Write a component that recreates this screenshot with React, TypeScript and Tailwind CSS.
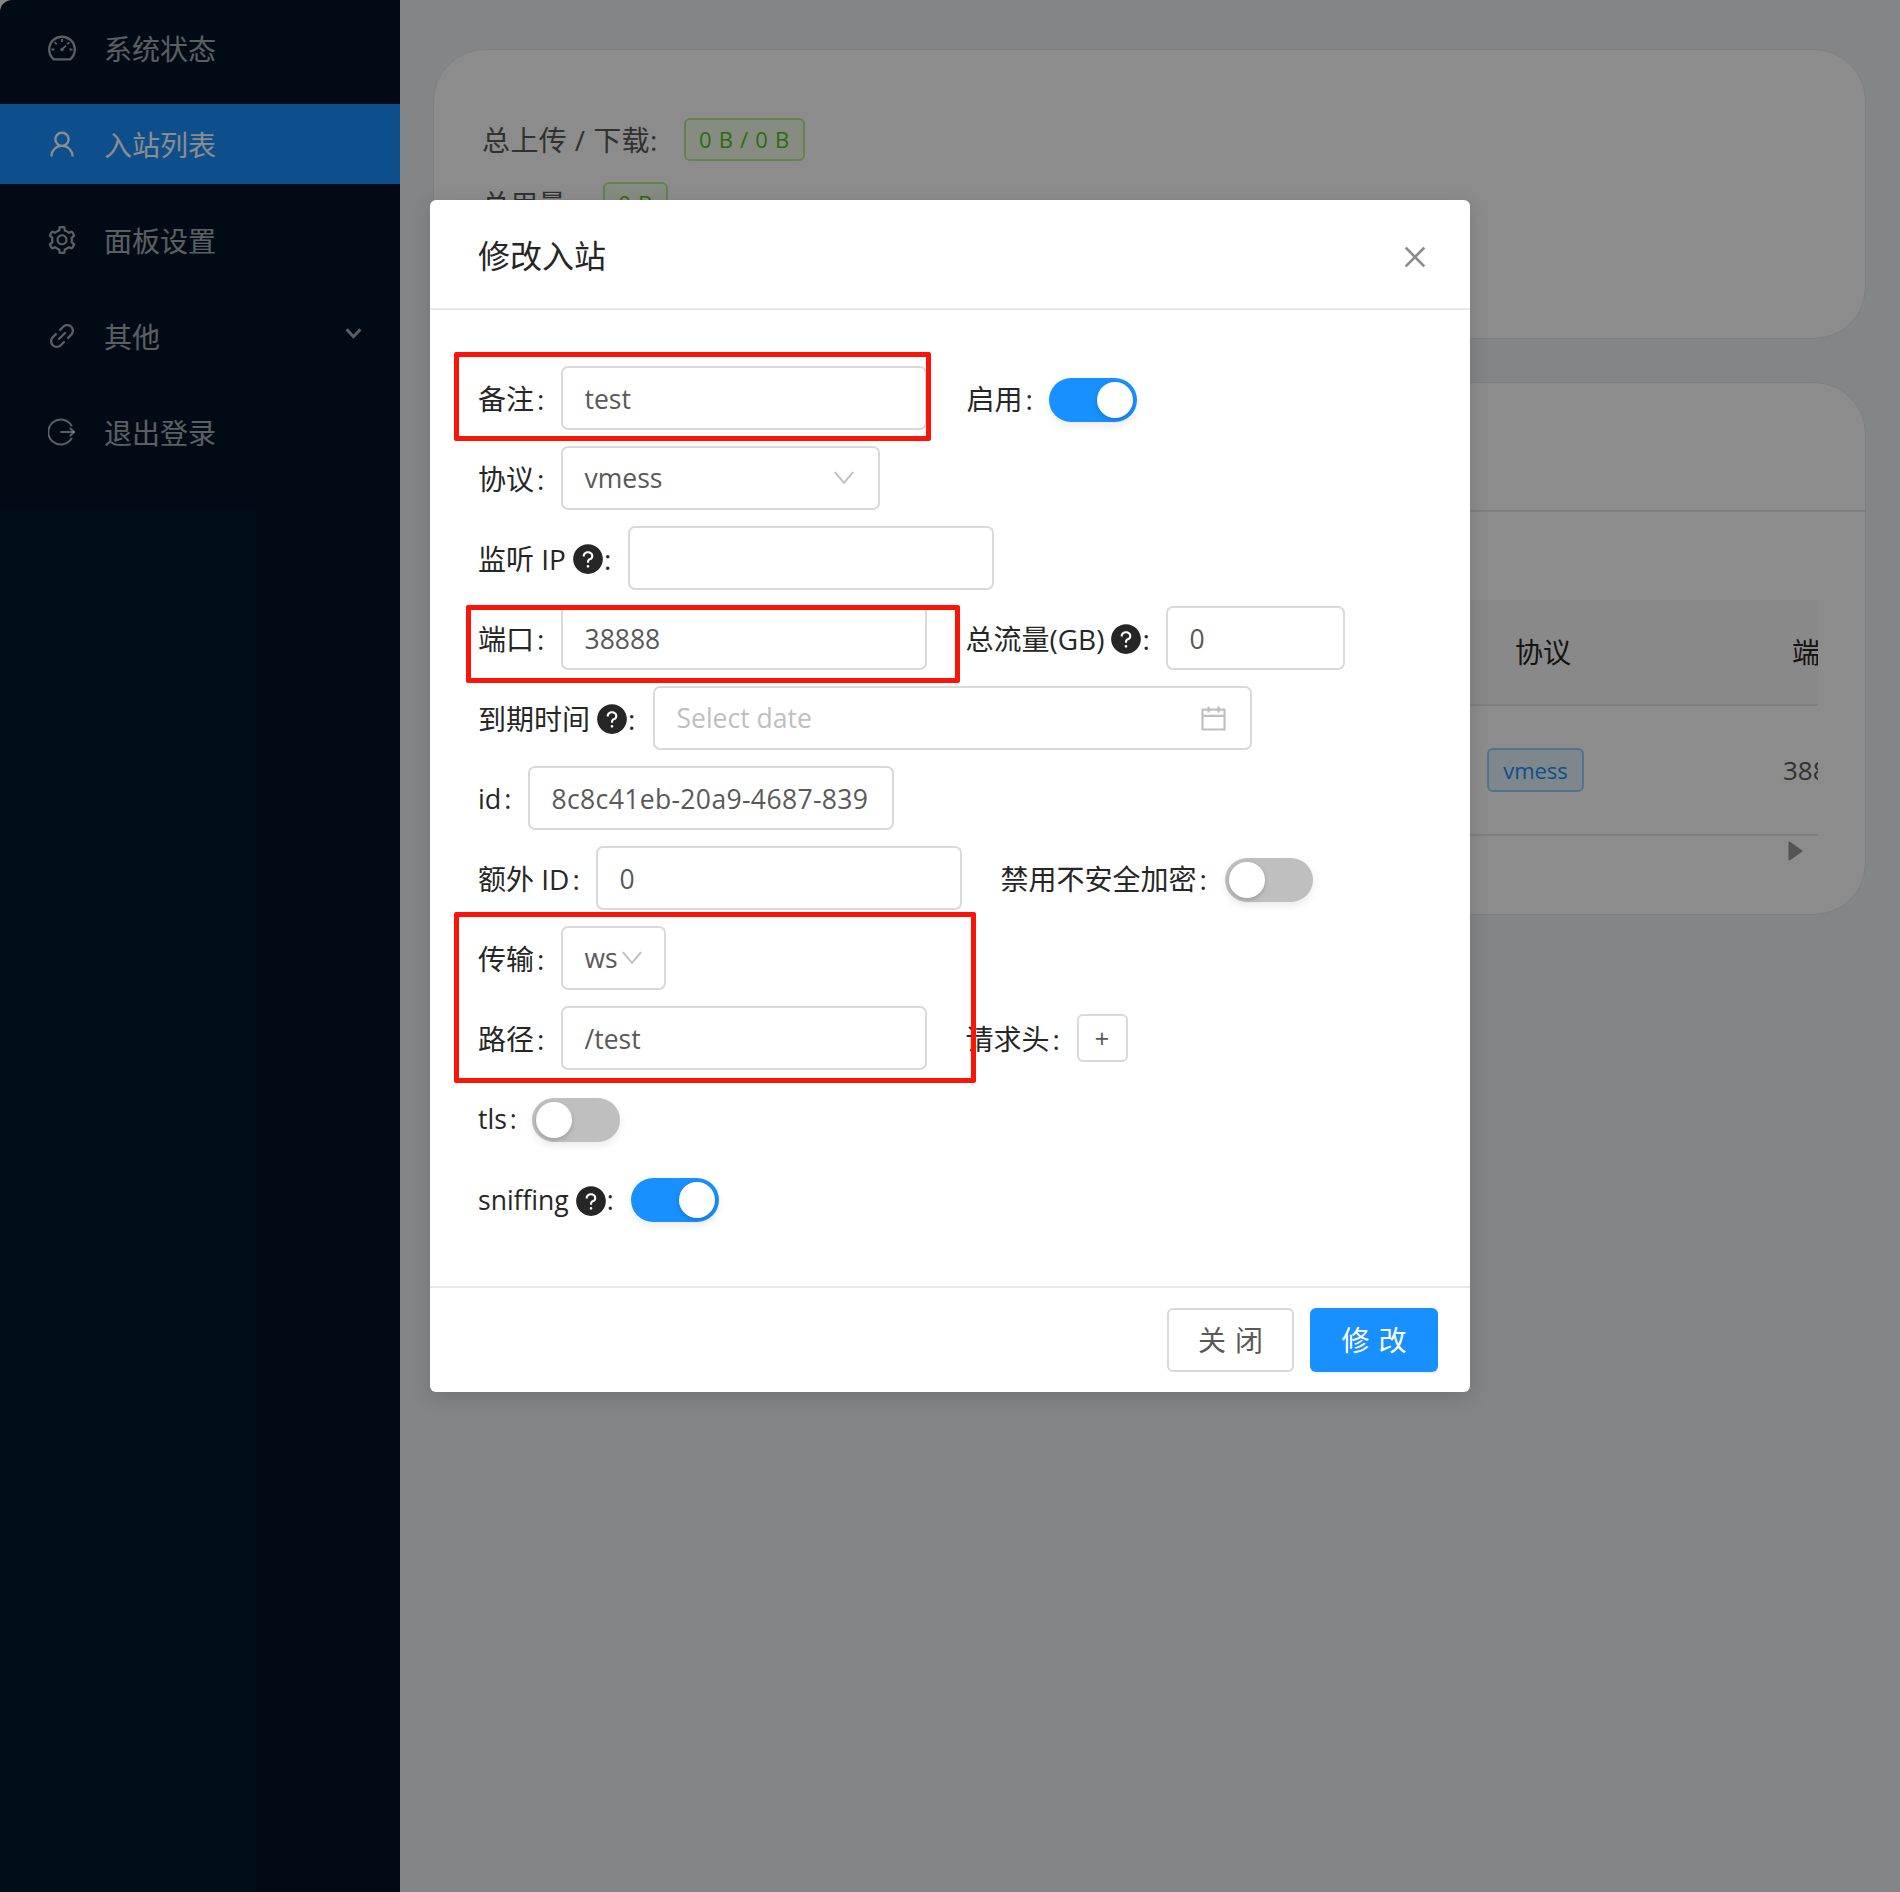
import React from "react";
import {
  AiFillQuestionCircle,
  AiOutlineCalendar,
  AiOutlineClose,
  AiOutlineDashboard,
  AiOutlineLink,
  AiOutlineSetting,
  AiOutlineUser,
} from "react-icons/ai";

const LogoutIcon = () => (
  <svg viewBox="0 0 28 28" className="w-[28px] h-[28px]" fill="none" stroke="currentColor" strokeWidth="2" strokeLinecap="round">
    <path d="M23.5 7.5A12.5 12.5 0 1 0 23.5 20.5" />
    <path d="M13 14H26" />
    <path d="M22.5 10.5L26 14L22.5 17.5" strokeLinejoin="round" />
  </svg>
);

function MenuItem({ icon, text, active, chevron }: { icon: React.ReactNode; text: string; active?: boolean; chevron?: boolean }) {
  return (
    <div className={`h-[80px] mb-[16px] flex items-center pl-[48px] pr-[38px] text-[28px] ${active ? "bg-[#1890ff] text-white" : "text-white/65"}`}>
      <span className="w-[28px] h-[28px] flex items-center justify-center text-[32px] [&_svg]:shrink-0">{icon}</span>
      <span className="ml-[28px] flex-1 pt-[2px]">{text}</span>
      {chevron && (
        <svg viewBox="0 0 18 12" className="w-[17px] h-[11px] -mt-[6px]" fill="none" stroke="currentColor" strokeWidth="3.2">
          <path d="M1.5 1.5L9 9.5L16.5 1.5" />
        </svg>
      )}
    </div>
  );
}

function Sidebar() {
  return (
    <aside className="w-[400px] shrink-0 bg-[#001529] pt-[8px] rounded-tl-[12px]">
      <MenuItem icon={<AiOutlineDashboard />} text="系统状态" />
      <MenuItem icon={<AiOutlineUser />} text="入站列表" active />
      <MenuItem icon={<AiOutlineSetting />} text="面板设置" />
      <MenuItem icon={<AiOutlineLink />} text="其他" chevron />
      <MenuItem icon={<LogoutIcon />} text="退出登录" />
    </aside>
  );
}

function GreenTag({ text, w }: { text: string; w: string }) {
  return (
    <span className={`${w} h-[43px] flex items-center justify-center whitespace-nowrap rounded-[6px] border-2 border-[#b7eb8f] bg-[#f6ffed] text-[#52c41a] text-[22px] tracking-[0.7px]`}>
      {text}
    </span>
  );
}

function Background() {
  return (
    <div className="flex w-[1900px] h-[1892px] bg-[#f0f2f5] text-[#262626]">
      <Sidebar />
      <main className="flex-1 pl-[33px] pr-[34px] pt-[49px]">
        <section className="h-[290px] bg-white rounded-[52px] border border-[#e8e8e8] pl-[48px] pt-[68px] text-[28px] text-[#595959]">
          <div className="flex items-center h-[43px]">
            <span className="w-[202px] shrink-0 whitespace-nowrap tracking-[0.4px]">总上传 / 下载:</span>
            <GreenTag text="0 B / 0 B" w="w-[121px]" />
          </div>
          <div className="flex items-center h-[43px] mt-[21px]">
            <span className="w-[121px] shrink-0">总用量:</span>
            <GreenTag text="0 B" w="w-[65px]" />
          </div>
        </section>
        <section className="mt-[43px] h-[533px] bg-white rounded-[52px] border border-[#e8e8e8]">
          <div className="h-[129px] border-b-2 border-[#e8e8e8]" />
          <div className="ml-[49px] w-[1335px] mt-[88px] overflow-hidden">
            <div className="h-[106px] bg-[#fafafa] border-b-2 border-[#e8e8e8] flex items-center text-[28px] text-[#262626]">
              <span className="ml-[1032px] w-[277px] shrink-0">协议</span>
              <span className="shrink-0">端口</span>
            </div>
            <div className="h-[130px] border-b-2 border-[#e8e8e8] flex items-center text-[26px] text-[#595959]">
              <span className="ml-[1004px] w-[97px] h-[44px] shrink-0 flex items-center justify-center rounded-[6px] border-2 border-[#91d5ff] bg-[#e6f7ff] text-[#1890ff] text-[22px]">vmess</span>
              <span className="ml-[199px] shrink-0">38888</span>
            </div>
          </div>
          <div className="ml-[1354px] mt-[5px] text-[#9a9a9a]">
            <svg viewBox="0 0 15 20" className="w-[15px] h-[20px]" fill="currentColor" stroke="currentColor" strokeWidth="2" strokeLinejoin="round">
              <path d="M1.5 1.5L13.5 10L1.5 18.5Z" />
            </svg>
          </div>
        </section>
      </main>
    </div>
  );
}

function Help() {
  return <AiFillQuestionCircle className="w-[34px] h-[34px] ml-[5px] -mr-[4px] text-[#262626] shrink-0" />;
}

function Label({ text, w, help, size }: { text: string; w: string; help?: boolean; size?: string }) {
  return (
    <span className={`${w} ${size ?? "text-[28px]"} shrink-0 flex items-center whitespace-nowrap text-[#262626] pt-[2px]`}>
      <span>{text}</span>
      {help && <Help />}
      <span className="ml-[3px]">:</span>
    </span>
  );
}

function Field({ value, w, placeholder, extra }: { value?: string; w: string; placeholder?: string; extra?: string }) {
  return (
    <input
      readOnly
      value={value ?? ""}
      placeholder={placeholder}
      className={`${w} ${extra ?? "pr-[18px]"} h-[64px] shrink-0 rounded-[7px] border-2 border-[#d9d9d9] bg-white pl-[22px] pt-[2px] text-[26.5px] text-[#595959] placeholder:text-[#bfbfbf] outline-none`}
    />
  );
}

function SelectBox({ value, w, arrowClass }: { value: string; w: string; arrowClass: string }) {
  return (
    <div className={`${w} h-[64px] shrink-0 rounded-[7px] border-2 border-[#d9d9d9] bg-white pl-[22px] flex items-center text-[26.5px] text-[#595959]`}>
      <span className="pt-[2px]">{value}</span>
      <svg viewBox="0 0 22 14" className={`w-[20px] h-[13px] text-[#bfbfbf] ${arrowClass}`} fill="none" stroke="currentColor" strokeWidth="2">
        <path d="M1 1L11 13L21 1" />
      </svg>
    </div>
  );
}

function Switch({ on, lift }: { on?: boolean; lift?: string }) {
  return (
    <span className={`w-[88px] h-[44px] shrink-0 rounded-full p-[4px] flex shadow-[0_4px_8px_rgba(0,0,0,0.08)] ${lift ?? ""} ${on ? "bg-[#1890ff] justify-end" : "bg-[#bfbfbf] justify-start"}`}>
      <span className="w-[36px] h-[36px] rounded-full bg-white shadow-[0_2px_4px_rgba(0,35,11,0.2)]" />
    </span>
  );
}

function Row({ children, h = "h-[80px]" }: { children: React.ReactNode; h?: string }) {
  return <div className={`${h} flex items-center`}>{children}</div>;
}

function Modal() {
  return (
    <div className="relative w-[1040px] bg-white rounded-[6px] shadow-[0_5px_20px_rgba(0,0,0,0.15)]">
      <header className="h-[110px] pl-[48px] pr-[40px] flex items-center justify-between border-b-2 border-[#e8e8e8]">
        <h2 className="text-[32px] text-[#262626] font-normal pt-[3px]">修改入站</h2>
        <AiOutlineClose className="w-[30px] h-[30px] mt-[5px] text-[#8c8c8c] [&_path]:stroke-current [&_path]:stroke-[8]" />
      </header>

      <form className="pl-[48px] pt-[48px] pb-[46px]">
        <Row>
          <Label text="备注" w="w-[82.5px]" />
          <Field value="test" w="w-[366px]" />
          <span className="ml-[40px]"><Label text="启用" w="w-[82.5px]" /></span>
          <Switch on lift="mt-[3px]" />
        </Row>
        <Row>
          <Label text="协议" w="w-[82.5px]" />
          <SelectBox value="vmess" w="w-[319px]" arrowClass="ml-auto mr-[24px] -mt-[2px]" />
        </Row>
        <Row>
          <Label text="监听 IP" w="w-[149.5px]" help />
          <Field w="w-[366px]" />
        </Row>
        <Row>
          <Label text="端口" w="w-[82.5px]" />
          <Field value="38888" w="w-[366px]" />
          <span className="ml-[39px]"><Label text="总流量(GB)" w="w-[200px]" help /></span>
          <Field value="0" w="w-[179px]" />
        </Row>
        <Row>
          <Label text="到期时间" w="w-[174.5px]" help />
          <div className="w-[599.5px] h-[64px] shrink-0 rounded-[7px] border-2 border-[#d9d9d9] bg-white pl-[22px] pr-[21px] flex items-center justify-between text-[26.5px] text-[#bfbfbf]">
            <span className="pt-[2px]">Select date</span>
            <AiOutlineCalendar className="w-[31px] h-[31px]" />
          </div>
        </Row>
        <Row>
          <Label text="id" w="w-[49.5px]" size="text-[27px]" />
          <Field value="8c8c41eb-20a9-4687-8391-0d8c8a4f0e1b" w="w-[366px]" extra="pr-[22px] tracking-[0.36px]" />
        </Row>
        <Row>
          <Label text="额外 ID" w="w-[117.5px]" />
          <Field value="0" w="w-[366px]" />
          <span className="ml-[39px]"><Label text="禁用不安全加密" w="w-[224px]" /></span>
          <Switch lift="mt-[3px]" />
        </Row>
        <Row>
          <Label text="传输" w="w-[82.5px]" />
          <SelectBox value="ws" w="w-[105px]" arrowClass="ml-[4px] -mt-[2px]" />
        </Row>
        <Row>
          <Label text="路径" w="w-[82.5px]" />
          <Field value="/test" w="w-[366px]" />
          <span className="ml-[39px]"><Label text="请求头" w="w-[111px]" /></span>
          <button type="button" className="w-[51px] h-[48px] rounded-[6px] border-2 border-[#d9d9d9] bg-white text-[26px] text-[#595959] flex items-center justify-center">+</button>
        </Row>
        <Row h="h-[82px]">
          <Label text="tls" w="w-[54px]" size="text-[26.5px]" />
          <Switch lift="mt-[1px]" />
        </Row>
        <Row>
          <Label text="sniffing" w="w-[153px]" help size="text-[26.5px]" />
          <Switch on />
        </Row>
      </form>

      <footer className="h-[106px] pb-[1px] border-t-2 border-[#e8e8e8] flex items-center justify-end gap-[16px] pr-[32px]">
        <button type="button" className="w-[127px] h-[64px] rounded-[6px] border-2 border-[#d9d9d9] bg-white text-[28px] tracking-[9px] pl-[9px] text-[#595959]">关闭</button>
        <button type="button" className="w-[128px] h-[64px] rounded-[6px] bg-[#1890ff] text-[28px] tracking-[9px] pl-[9px] text-white shadow-[0_2px_0_rgba(0,0,0,0.045)]">修改</button>
      </footer>

      <div className="absolute left-[24px] top-[152px] w-[477px] h-[89px] border-[5px] border-[#fb1508] rounded-[2px]" />
      <div className="absolute left-[36px] top-[405px] w-[494px] h-[78px] border-[5px] border-[#fb1508] rounded-[2px]" />
      <div className="absolute left-[24px] top-[712px] w-[522px] h-[171px] border-[5px] border-[#fb1508] rounded-[2px]" />
    </div>
  );
}

export default function App() {
  return (
    <div className={`relative w-[1900px] h-[1892px] overflow-hidden bg-[#cccccc] font-["Open_Sans","Noto_Sans_CJK_SC",sans-serif]`}>
      <Background />
      <div className="absolute inset-0 bg-black/45 flex justify-center pt-[200px] items-start">
        <Modal />
      </div>
    </div>
  );
}
